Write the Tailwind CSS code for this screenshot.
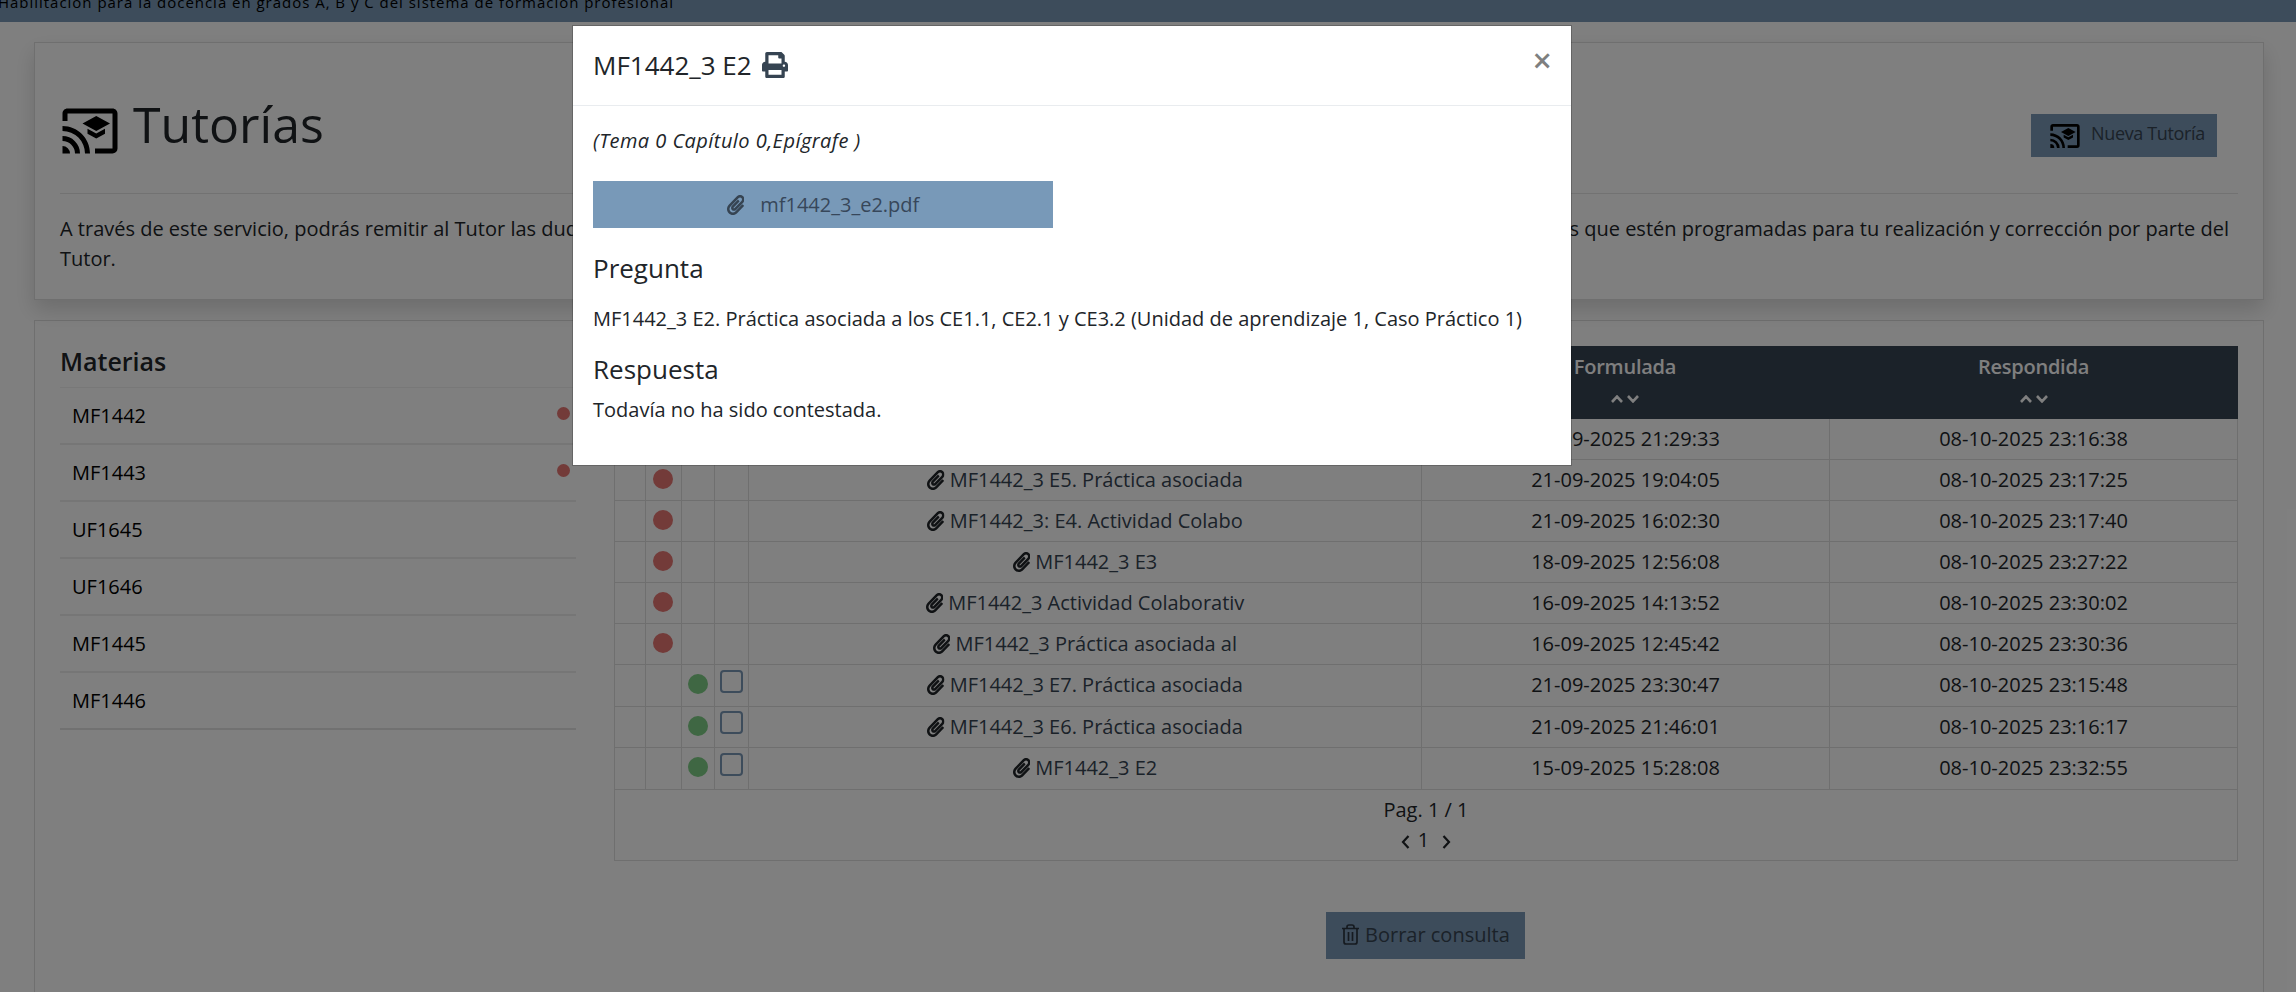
<!DOCTYPE html>
<html lang="es">
<head>
<meta charset="utf-8">
<title>Tutorías</title>
<script src="https://cdn.jsdelivr.net/npm/@tailwindcss/browser@4"></script>
</head>
<body class="relative h-[992px] w-[2296px] overflow-hidden bg-white font-['Open_Sans',sans-serif] text-[20px] leading-[30px] text-[#212529]">
<svg class="hidden">
  <symbol id="clip" viewBox="0 0 448 512"><path d="M43.246 466.142c-58.43-60.289-57.341-157.511 1.386-217.581L254.392 34c44.316-45.332 116.351-45.336 160.671 0 43.89 44.894 43.943 117.329 0 162.276L232.214 383.128c-29.855 30.537-78.633 30.111-107.982-.998-28.275-29.97-27.368-77.473 1.452-106.953l143.743-146.835c6.182-6.314 16.312-6.422 22.626-.241l22.861 22.379c6.315 6.182 6.422 16.312.241 22.626L171.427 319.927c-4.932 5.045-5.236 13.428-.648 18.292 4.372 4.634 11.245 4.711 15.688.165l182.849-186.851c19.613-20.062 19.613-52.725-.011-72.798-19.189-19.627-49.957-19.637-69.154 0L90.39 293.295c-34.763 35.56-35.299 93.12-1.191 128.313 34.01 35.093 88.985 35.137 123.058.286l172.06-175.999c6.177-6.319 16.307-6.433 22.626-.256l22.877 22.364c6.319 6.177 6.434 16.307.256 22.626l-172.06 175.998c-59.576 60.938-155.943 60.216-214.77-.485z"/></symbol>
  <symbol id="cast" viewBox="0 0 24 24"><path d="M21,3H3C1.89,3 1,3.89 1,5V8H3V5H21V19H14V21H21A2,2 0 0,0 23,19V5C23,3.89 22.1,3 21,3M1,10V12A9,9 0 0,1 10,21H12C12,14.92 7.07,10 1,10M1,14V16A5,5 0 0,1 6,21H8A7,7 0 0,0 1,14M1,18V21H4A3,3 0 0,0 1,18M11,11.09V13.09L14.5,15L18,13.09V11.09L14.5,13L11,11.09M14.5,6L9,9L14.5,12L20,9L14.5,6Z"/></symbol>
  <symbol id="sort" viewBox="0 0 28 8"><path d="M1 7 6 1.6 11 7M17 1 22 6.4 27 1" fill="none" stroke="#fff" stroke-width="2.6"/></symbol>
</svg>

<div class="flex h-full flex-col">
  <header class="h-[22px] shrink-0 overflow-hidden bg-[#7a98b6]">
    <p class="-mt-[13px] -ml-[2px] text-[15px] tracking-[0.975px] whitespace-nowrap text-black">Habilitación para la docencia en grados A, B y C del sistema de formación profesional</p>
  </header>

  <main class="flex flex-1 flex-col gap-5 pt-5 pr-8 pl-[34px]">
    <section class="h-[258px] shrink-0 border border-black/[0.125] px-[25px] shadow-[0_10px_20px_rgba(0,0,0,0.15)]">
      <div class="flex h-[151px] justify-between border-b border-black/10 pr-[21px]">
        <div class="flex pt-[58px]">
          <svg class="size-[60px] fill-black"><use href="#cast"/></svg>
          <h1 class="-mt-[7px] ml-[13px] text-[50px] leading-[60px]">Tutorías</h1>
        </div>
        <button class="mt-[71px] flex h-[43px] w-[186px] bg-[#7a98b6] pt-[6px] pl-[18px] text-left text-[#364452]">
          <svg class="size-8 fill-black"><use href="#cast"/></svg>
          <span class="-mt-[2px] ml-[10px] text-[18px] tracking-[-0.35px] whitespace-nowrap">Nueva Tutoría</span>
        </button>
      </div>
      <div class="pt-5 whitespace-nowrap">
        <div class="flex justify-between pr-[9px]"><span>A través de este servicio, podrás remitir al Tutor las dudas</span><span>prácticas que estén programadas para tu realización y corrección por parte del</span></div>
        <p>Tutor.</p>
      </div>
    </section>

    <section class="flex min-h-0 flex-1 border border-b-0 border-black/[0.125] pr-[25px] pl-[25px]">
      <aside class="w-[516px] shrink-0">
        <h2 class="h-[67px] border-b border-black/[0.06] pt-[25px] text-[25px] leading-[30px] font-semibold">Materias</h2>
        <ul id="subjects" class="text-black"></ul>
      </aside>
      <div class="ml-[38px] flex w-[1624px] shrink-0 flex-col items-center pt-[25px]">
        <div class="w-full text-center">
          <div class="grid h-[73px] grid-cols-[807px_408px_409px] bg-[#364452] pt-[6px] font-semibold text-white">
            <span></span>
            <div class="flex flex-col items-center"><span class="tracking-[-0.25px]">Formulada</span><svg class="mt-[13px] h-2 w-7"><use href="#sort"/></svg></div>
            <div class="flex flex-col items-center"><span class="tracking-[-0.25px]">Respondida</span><svg class="mt-[13px] h-2 w-7"><use href="#sort"/></svg></div>
          </div>
          <div id="rows"></div>
          <div class="h-[71px] border-x border-b border-black/[0.125] pt-[5px]">
            <p>Pag. 1 / 1</p>
            <div class="flex items-center justify-center">
              <svg class="mt-1 h-[14px] w-[9px]" viewBox="0 0 9 14"><path d="M7.5 1 2 7l5.500 6" fill="none" stroke="#212529" stroke-width="2.2"/></svg>
              <span class="mr-[13px] ml-[8px]">1</span>
              <svg class="mt-1 h-[14px] w-[9px]" viewBox="0 0 9 14"><path d="M1.500 1 7 7l-5.500 6" fill="none" stroke="#212529" stroke-width="2.2"/></svg>
            </div>
          </div>
        </div>
        <button class="mt-[51px] mr-[1px] flex h-[47px] w-[199px] bg-[#7a98b6] pt-[8px] pl-[16px] text-[#364452]">
          <svg class="mt-1 h-[21px] w-[17px]" viewBox="0 0 17 21" fill="none" stroke="#2b3540" stroke-width="1.700"><path d="M0 4.500h17M5 4.500V3q0-2 2-2h3q2 0 2 2v1.500M2 4.500V18q0 2 2 2h9q2 0 2-2V4.500M6.500 8v9M10.500 8v9"/></svg>
          <span class="ml-[6px] whitespace-nowrap">Borrar consulta</span>
        </button>
      </div>
    </section>
  </main>
</div>

<div class="absolute inset-0 bg-black/50">
  <div class="mx-auto mt-[25px] h-[441px] w-[1000px] -translate-x-[76px] border border-black/20 bg-white bg-clip-padding">
    <div class="flex h-20 items-start justify-between border-b border-[#e9ecef] pr-[19px] pl-5">
      <h5 class="flex pt-6 text-[26px] leading-[30px]">MF1442_3 E2 <svg class="mt-[2px] ml-[10px] size-[26px] fill-[#364452]" viewBox="0 0 512 512"><path d="M448 192V77.250c0-8.490-3.370-16.620-9.370-22.630L393.370 9.370c-6-6-14.140-9.370-22.630-9.370H96C78.330 0 64 14.330 64 32v160c-35.350 0-64 28.650-64 64v112c0 8.840 7.160 16 16 16h48v96c0 17.670 14.330 32 32 32h320c17.670 0 32-14.330 32-32v-96h48c8.840 0 16-7.160 16-16V256c0-35.350-28.650-64-64-64zm-64 256H128v-96h256v96zm0-224H128V64h192v48c0 8.840 7.160 16 16 16h48v96zm48 72c-13.250 0-24-10.750-24-24 0-13.260 10.750-24 24-24s24 10.740 24 24c0 13.250-10.750 24-24 24z"/></svg></h5>
      <button class="pt-[19px] text-[34px] leading-[30px] font-semibold text-black/50">×</button>
    </div>
    <div class="px-5 pt-5">
      <p class="tracking-[0.45px] italic">(Tema 0 Capítulo 0,Epígrafe )</p>
      <div class="mt-[25px] flex h-[47px] w-[460px] justify-center bg-[#7899b8] pt-[9px] text-[#37475a]">
        <svg class="mt-[5px] mr-[16px] h-5 w-[17.500px] fill-[#364452]"><use href="#clip"/></svg><span>mf1442_3_e2.pdf</span>
      </div>
      <h5 class="mt-[25px] text-[26px] leading-[30px]">Pregunta</h5>
      <p class="mt-[21px] whitespace-nowrap">MF1442_3 E2. Práctica asociada a los CE1.1, CE2.1 y CE3.2 (Unidad de aprendizaje 1, Caso Práctico 1)</p>
      <h5 class="mt-5 text-[26px] leading-[30px]">Respuesta</h5>
      <p class="mt-[11px]">Todavía no ha sido contestada.</p>
    </div>
  </div>
</div>

<script>
document.getElementById('subjects').innerHTML = [['MF1442', 1], ['MF1443', 1], ['UF1645'], ['UF1646'], ['MF1445'], ['MF1446']].map(([n, d]) =>
  `<li class="flex h-[57px] justify-between border-b-2 border-black/[0.07] pt-[13px] pr-[6px] pl-[12px] last:border-black/[0.11]">${n}${d ? '<i class="mt-[6px] size-[13px] rounded-full bg-[#e67672]"></i>' : ''}</li>`).join('');
const rows = [
  ['r', '', '21-09-2025 21:29:33', '08-10-2025 23:16:38'],
  ['r', 'MF1442_3 E5. Práctica asociada', '21-09-2025 19:04:05', '08-10-2025 23:17:25'],
  ['r', 'MF1442_3: E4. Actividad Colabo', '21-09-2025 16:02:30', '08-10-2025 23:17:40'],
  ['r', 'MF1442_3 E3', '18-09-2025 12:56:08', '08-10-2025 23:27:22'],
  ['r', 'MF1442_3 Actividad Colaborativ', '16-09-2025 14:13:52', '08-10-2025 23:30:02'],
  ['r', 'MF1442_3 Práctica asociada al', '16-09-2025 12:45:42', '08-10-2025 23:30:36'],
  ['g', 'MF1442_3 E7. Práctica asociada', '21-09-2025 23:30:47', '08-10-2025 23:15:48'],
  ['g', 'MF1442_3 E6. Práctica asociada', '21-09-2025 21:46:01', '08-10-2025 23:16:17'],
  ['g', 'MF1442_3 E2', '15-09-2025 15:28:08', '08-10-2025 23:32:55'],
];
document.getElementById('rows').innerHTML = rows.map(([c, n, f, r], i) => `
  <div class="grid ${i == 6 || i == 8 ? 'h-[42px]' : 'h-[41px]'} grid-cols-[31px_36px_33px_34px_673px_408px_407px] divide-x divide-black/[0.125] border-x border-b border-black/[0.125]">
    <div></div>
    <div class="pt-[9px] pl-[7px]">${c == 'r' ? '<i class="block size-5 rounded-full bg-[#e67672]"></i>' : ''}</div>
    <div class="pt-[9px] pl-[6px]">${c == 'g' ? '<i class="block size-5 rounded-full bg-[#7ece86]"></i>' : ''}</div>
    <div class="${i == 7 ? 'pt-[4px]' : 'pt-[5px]'} pl-[5px]">${c == 'g' ? '<i class="block size-[23px] rounded-[4px] border-2 border-[#7a98b6]"></i>' : ''}</div>
    <div class="flex justify-center pt-[5px] text-[#364452]">${n ? `<svg class="mt-[5px] mr-[5px] h-5 w-[17.500px] fill-[#212529]"><use href="#clip"/></svg>${n}` : ''}</div>
    <div class="pt-[5px]">${f}</div>
    <div class="pt-[5px]">${r}</div>
  </div>`).join('');
</script>
</body>
</html>
